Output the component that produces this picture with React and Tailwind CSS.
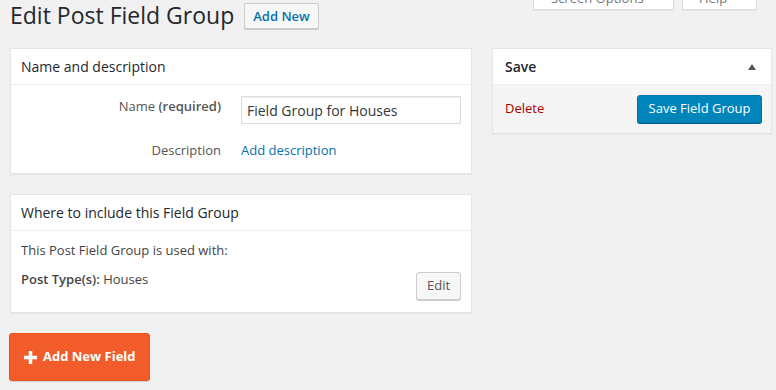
import React from "react";

export default function App() {
  return (
    <div
      className="min-h-[390px] w-[776px] overflow-hidden bg-[#f1f1f1] text-[13px] text-[#444]"
      style={{ fontFamily: '"Open Sans", "Liberation Sans", sans-serif' }}
    >
      {/* Header row */}
      <div className="flex items-center pl-[10px] pt-[1px] pr-[19px]">
        <h1 className="m-0 text-[23px] font-normal leading-[29px] text-[#23282d]">
          Edit Post Field Group
        </h1>
        <button className="ml-[10px] h-[26px] rounded-[2px] border border-[#ccc] bg-[#f7f7f7] px-[8px] text-[13px] font-semibold leading-[24px] text-[#0073aa] shadow-[0_1px_0_#ccc]">
          Add New
        </button>
        <div className="ml-auto -mt-[19px] flex gap-[8px] self-start">
          <div className="flex h-[28px] w-[141px] items-end border border-t-0 border-[#ddd] bg-white pb-[1px] pl-[17px] leading-[20px] text-[#72777c] shadow-[0_1px_1px_rgba(0,0,0,0.04)]">
            Screen Options
          </div>
          <div className="flex h-[28px] w-[75px] items-end border border-t-0 border-[#ddd] bg-white pb-[1px] pl-[16px] leading-[20px] text-[#72777c] shadow-[0_1px_1px_rgba(0,0,0,0.04)]">
            Help
          </div>
        </div>
      </div>

      {/* Main content */}
      <div className="mt-[18px] flex items-start pl-[10px]">
        {/* Left column */}
        <div className="flex w-[462px] flex-col">
          {/* Name and description */}
          <div className="border border-[#e5e5e5] bg-white shadow-[0_1px_1px_rgba(0,0,0,0.04)]">
            <div className="flex h-[36px] items-center border-b border-[#eee] pl-[10px] text-[14px] text-[#23282d]">
              Name and description
            </div>
            <div className="pt-[11px] pb-[13px]">
              <div className="flex items-start">
                <div className="w-[210px] text-right leading-[20px] text-[#555]">
                  Name <span className="font-semibold">(required)</span>
                </div>
                <input
                  readOnly
                  value="Field Group for Houses"
                  className="ml-[20px] h-[28px] w-[220px] border border-[#ddd] bg-white px-[5px] text-[14px] text-[#32373c] shadow-[inset_0_1px_2px_rgba(0,0,0,0.07)] outline-none"
                  style={{ fontFamily: '"Open Sans", "Liberation Sans", sans-serif' }}
                />
              </div>
              <div className="mt-[16px] flex items-start">
                <div className="w-[210px] text-right leading-[20px] text-[#555]">
                  Description
                </div>
                <a className="ml-[20px] leading-[20px] text-[#0073aa]">Add description</a>
              </div>
            </div>
          </div>

          {/* Where to include */}
          <div className="mt-[20px] border border-[#e5e5e5] bg-white shadow-[0_1px_1px_rgba(0,0,0,0.04)]">
            <div className="flex h-[36px] items-center border-b border-[#eee] pl-[10px] text-[14px] text-[#23282d]">
              Where to include this Field Group
            </div>
            <div className="px-[10px] pt-[9px] pb-[12px]">
              <div className="leading-[20px]">This Post Field Group is used with:</div>
              <div className="mt-[9px] flex items-start justify-between">
                <div className="leading-[20px]">
                  <span className="font-semibold">Post Type(s):</span> Houses
                </div>
                <button className="mt-[3px] h-[28px] w-[45px] rounded-[3px] border border-[#ccc] bg-[#f7f7f7] text-[13px] text-[#555] shadow-[0_1px_0_#ccc]">
                  Edit
                </button>
              </div>
            </div>
          </div>

          {/* Add New Field */}
          <button className="-ml-[1px] mt-[20px] flex h-[48px] w-[141px] items-center gap-[6px] rounded-[3px] border border-[#e9541f] bg-[#f25c2a] pl-[14px] text-[13px] font-bold text-white shadow-[0_1px_1px_rgba(0,0,0,0.15)]">
            <svg width="13" height="13" viewBox="0 0 13 13">
              <rect x="4.75" y="0" width="3.5" height="13" fill="#fff" />
              <rect x="0" y="4.75" width="13" height="3.5" fill="#fff" />
            </svg>
            Add New Field
          </button>
        </div>

        {/* Sidebar */}
        <div className="ml-[20px] w-[280px] border border-[#e5e5e5] bg-white shadow-[0_1px_1px_rgba(0,0,0,0.04)]">
          <div className="flex h-[36px] items-center justify-between border-b border-[#eee] pl-[12px] pr-[15px]">
            <span className="text-[14px] font-semibold text-[#23282d]">Save</span>
            <svg width="8" height="6" viewBox="0 0 8 6">
              <path d="M4 0 L8 6 L0 6 Z" fill="#555" />
            </svg>
          </div>
          <div className="flex h-[48px] items-center justify-between bg-[#f5f5f5] pl-[12px] pr-[9px]">
            <a className="text-[#a00]">Delete</a>
            <button className="h-[28px] w-[125px] rounded-[3px] border border-[#0073aa] bg-[#0085ba] text-[13px] text-white shadow-[0_1px_0_#006799]">
              Save Field Group
            </button>
          </div>
        </div>
      </div>
    </div>
  );
}
